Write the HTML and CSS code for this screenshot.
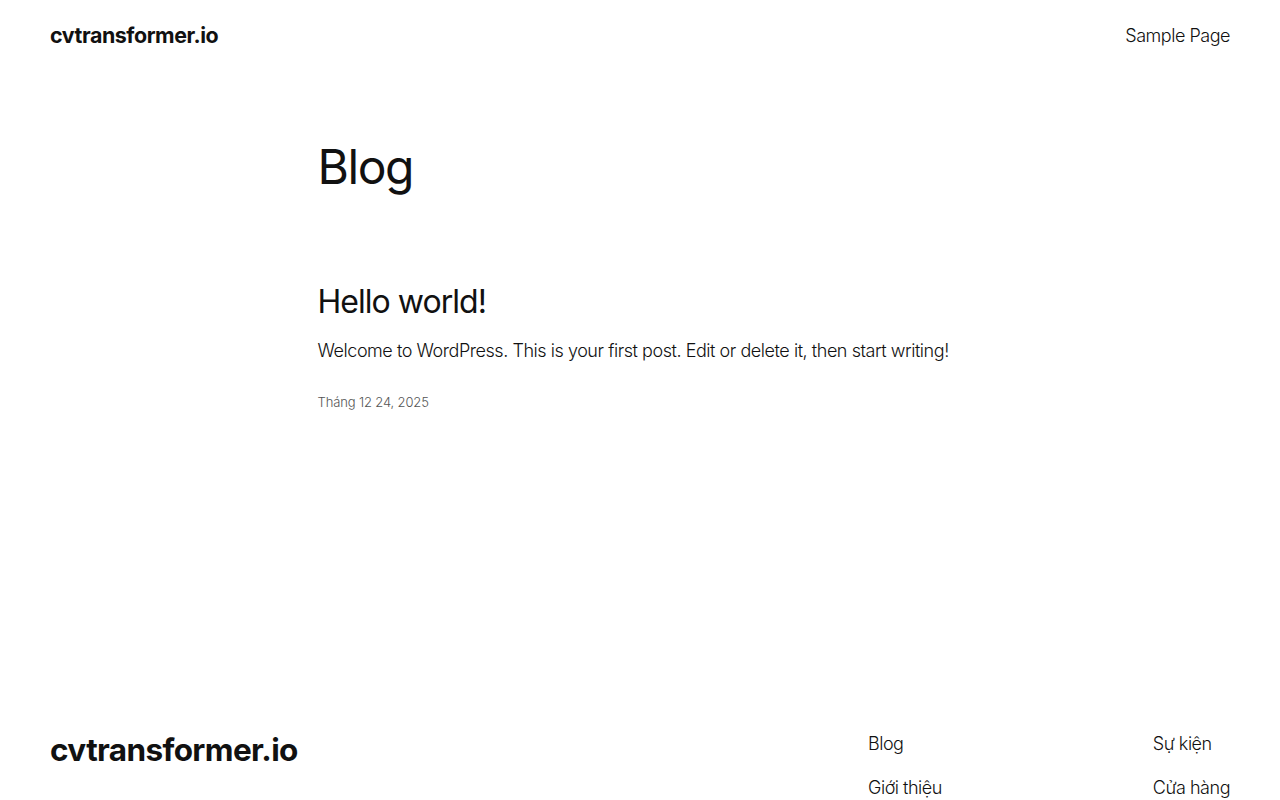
FILE: index.html
```html
<!DOCTYPE html>
<html lang="vi">
<head>
<meta charset="utf-8">
<title>Blog – cvtransformer.io</title>
<link rel="stylesheet" href="styles.css">
</head>
<body>
<header class="site-header">
  <a class="site-title" href="#">cvtransformer.io</a>
  <nav class="main-nav"><a href="#">Sample Page</a></nav>
</header>
<main class="content">
  <h1 class="page-title">Blog</h1>
  <article class="post">
    <h2 class="post-title">Hello world!</h2>
    <p class="post-excerpt">Welcome to WordPress. This is your first post. Edit or delete it, then start writing!</p>
    <div class="post-date">Tháng 12 24, 2025</div>
  </article>
</main>
<footer class="site-footer">
  <a class="footer-title" href="#">cvtransformer.io</a>
  <div class="footer-links">
    <ul class="link-col">
      <li><a href="#">Blog</a></li>
      <li><a href="#">Giới thiệu</a></li>
    </ul>
    <ul class="link-col">
      <li><a href="#">Sự kiện</a></li>
      <li><a href="#">Cửa hàng</a></li>
    </ul>
  </div>
</footer>
</body>
</html>
```
FILE: styles.css
```css
* { box-sizing: border-box; }
html, body { margin: 0; padding: 0; }
body {
  font-family: Inter, "Noto Sans", sans-serif;
  color: #111111;
  background: #ffffff;
  letter-spacing: -0.03em;
}
a { color: inherit; text-decoration: none; }

.site-header {
  display: flex;
  justify-content: space-between;
  align-items: center;
  height: 70px;
  padding: 0 50px;
}
.site-title {
  font-size: 21.4px;
  font-weight: 700;
  letter-spacing: -0.02em;
}
.main-nav a {
  font-size: 18px;
  font-weight: 300;
}

.content {
  width: 645px;
  margin: 0 auto;
  padding-top: 66px;
  min-height: 650px;
}
.page-title {
  margin: 0;
  font-size: 48px;
  font-weight: 400;
  line-height: 1.3;
  letter-spacing: -0.03em;
}
.post { margin-top: 85px; }
.post-title {
  margin: 0;
  font-size: 32px;
  font-weight: 400;
  line-height: 1.2;
  letter-spacing: -0.03em;
}
.post-excerpt {
  margin: 15px 0 0;
  font-size: 18px;
  font-weight: 300;
  line-height: 1.5;
  letter-spacing: -0.025em;
}
.post-date {
  margin-top: 30px;
  font-size: 13px;
  font-weight: 300;
  color: #555555;
  letter-spacing: -0.01em;
}

.site-footer {
  display: flex;
  justify-content: space-between;
  align-items: flex-start;
  padding: 11px 50px 0;
}
.footer-title {
  font-size: 31.5px;
  font-weight: 700;
  letter-spacing: -0.02em;
  line-height: 1.2;
}
.footer-links {
  display: flex;
  width: 362px;
  justify-content: space-between;
  padding-top: 1px;
}
.link-col {
  list-style: none;
  margin: 0;
  padding: 0;
  display: flex;
  flex-direction: column;
  gap: 20px;
}
.link-col a {
  font-size: 18px;
  font-weight: 300;
  line-height: 24px;
}
```
